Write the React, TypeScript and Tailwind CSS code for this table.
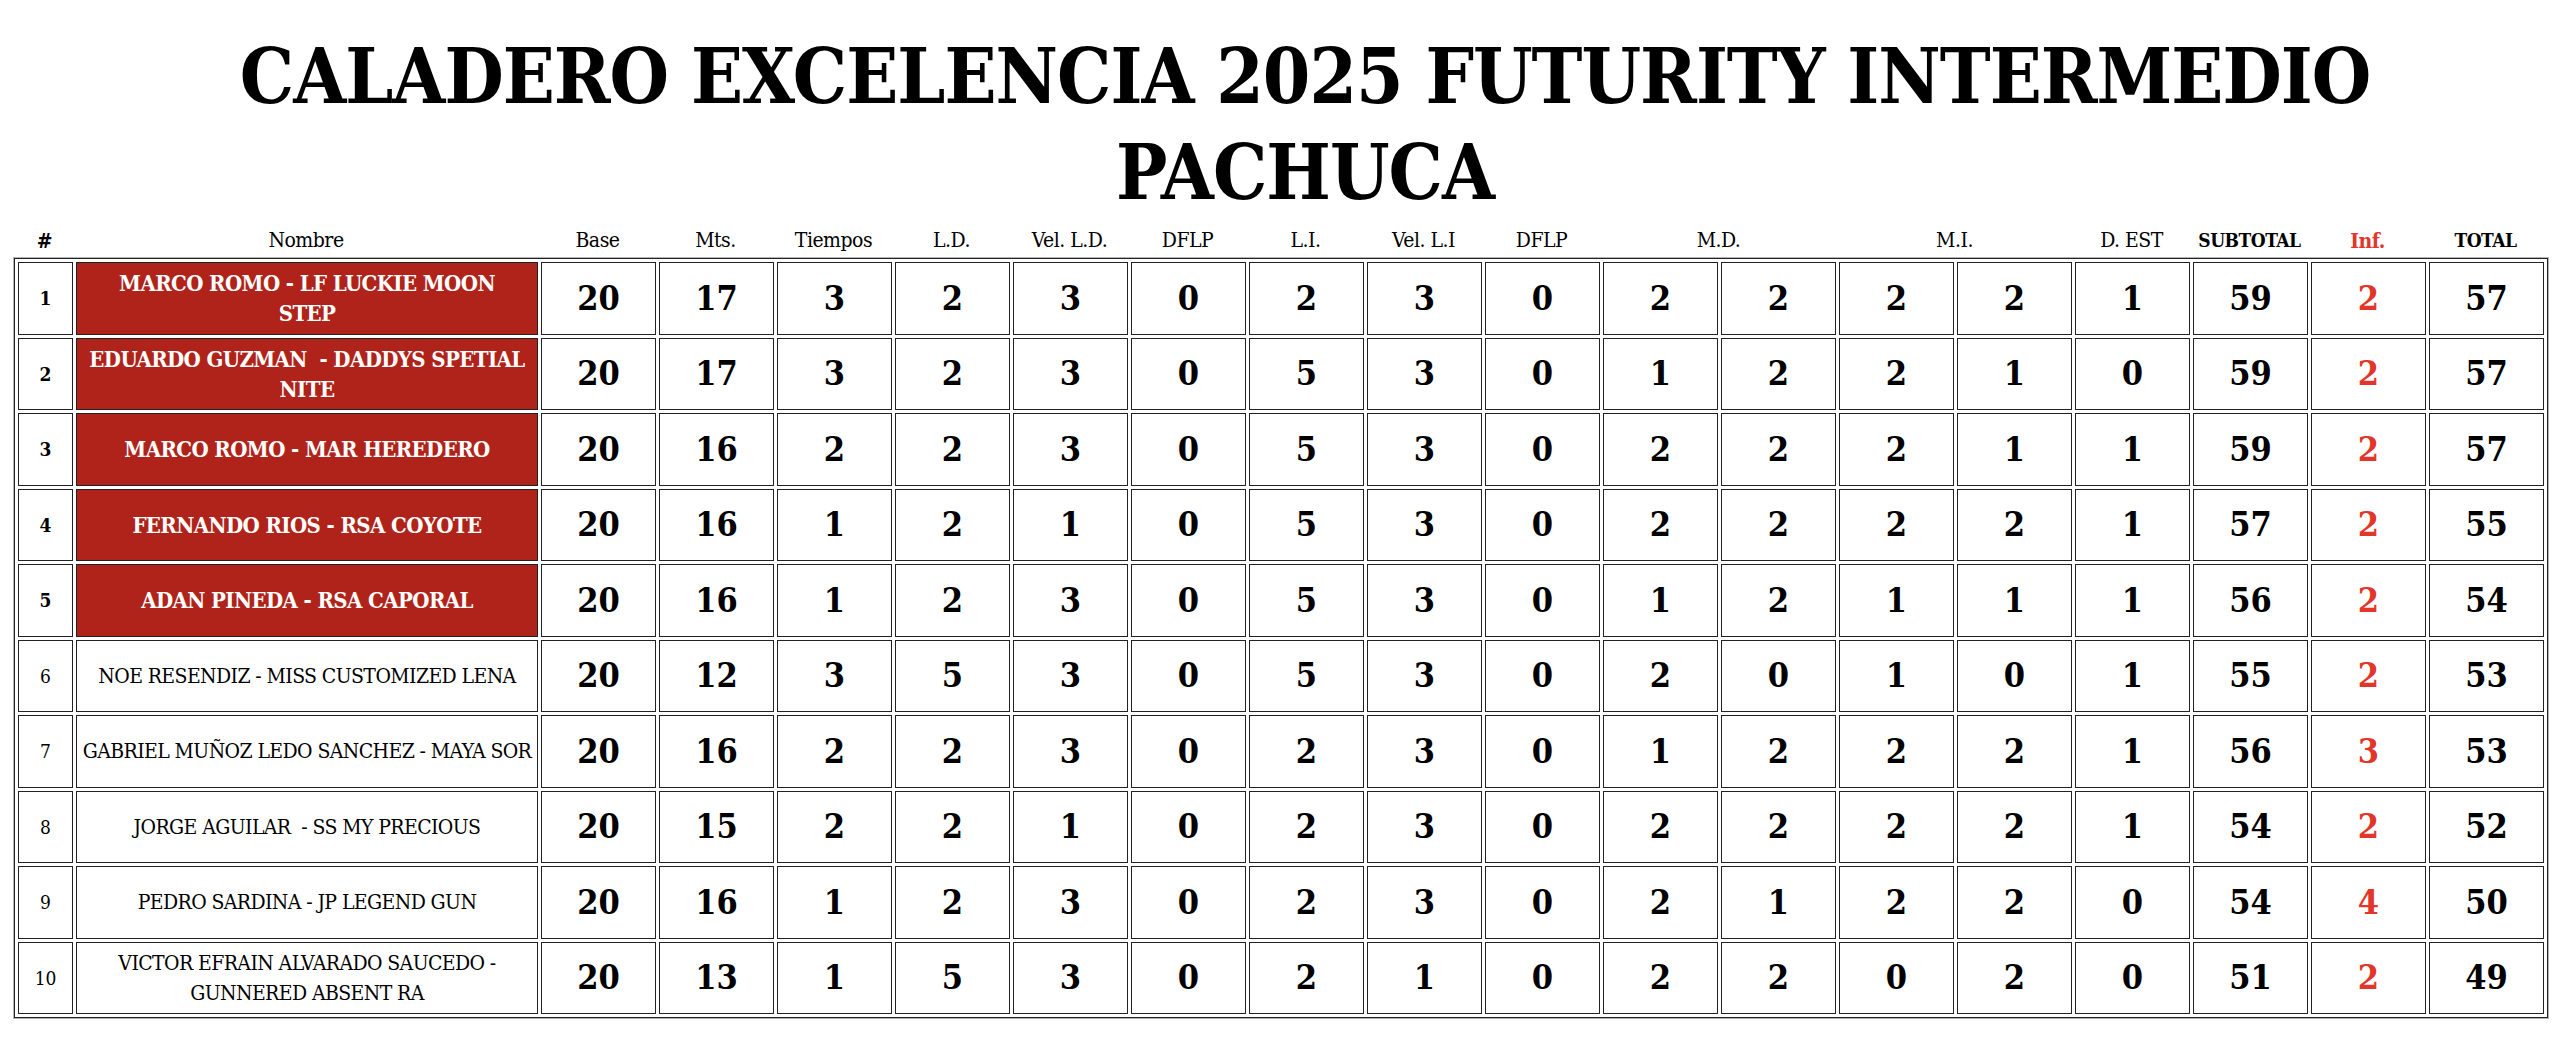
import React from 'react';

type Row = {
  n: number;
  name: string;
  vals: number[];
  top: boolean;
};

// line breaks follow the printed sheet
const rows: Row[] = [
  { n: 1, name: 'MARCO ROMO - LF LUCKIE MOON\nSTEP', vals: [20, 17, 3, 2, 3, 0, 2, 3, 0, 2, 2, 2, 2, 1, 59, 2, 57], top: true },
  { n: 2, name: 'EDUARDO GUZMAN  - DADDYS SPETIAL\nNITE', vals: [20, 17, 3, 2, 3, 0, 5, 3, 0, 1, 2, 2, 1, 0, 59, 2, 57], top: true },
  { n: 3, name: 'MARCO ROMO - MAR HEREDERO', vals: [20, 16, 2, 2, 3, 0, 5, 3, 0, 2, 2, 2, 1, 1, 59, 2, 57], top: true },
  { n: 4, name: 'FERNANDO RIOS - RSA COYOTE', vals: [20, 16, 1, 2, 1, 0, 5, 3, 0, 2, 2, 2, 2, 1, 57, 2, 55], top: true },
  { n: 5, name: 'ADAN PINEDA - RSA CAPORAL', vals: [20, 16, 1, 2, 3, 0, 5, 3, 0, 1, 2, 1, 1, 1, 56, 2, 54], top: true },
  { n: 6, name: 'NOE RESENDIZ - MISS CUSTOMIZED LENA', vals: [20, 12, 3, 5, 3, 0, 5, 3, 0, 2, 0, 1, 0, 1, 55, 2, 53], top: false },
  { n: 7, name: 'GABRIEL MUÑOZ LEDO SANCHEZ - MAYA SOR', vals: [20, 16, 2, 2, 3, 0, 2, 3, 0, 1, 2, 2, 2, 1, 56, 3, 53], top: false },
  { n: 8, name: 'JORGE AGUILAR  - SS MY PRECIOUS', vals: [20, 15, 2, 2, 1, 0, 2, 3, 0, 2, 2, 2, 2, 1, 54, 2, 52], top: false },
  { n: 9, name: 'PEDRO SARDINA - JP LEGEND GUN', vals: [20, 16, 1, 2, 3, 0, 2, 3, 0, 2, 1, 2, 2, 0, 54, 4, 50], top: false },
  { n: 10, name: 'VICTOR EFRAIN ALVARADO SAUCEDO -\nGUNNERED ABSENT RA', vals: [20, 13, 1, 5, 3, 0, 2, 1, 0, 2, 2, 0, 2, 0, 51, 2, 49], top: false },
];

const INF_COL = 15;

// fixed column widths, border-spacing of 3px comes on top
const Cols: React.FC = () => (
  <colgroup>
    <col className="w-[55px]" />
    <col className="w-[462px]" />
    {Array.from({ length: 17 }).map((_, i) => (
      <col key={i} className="w-[115px]" />
    ))}
  </colgroup>
);

const App: React.FC = () => {
  return (
    <div className="min-h-screen bg-white text-black font-['DejaVu_Serif_Condensed','DejaVu_Serif',serif]">
      <h1 className="pt-[29px] pl-[50px] text-center text-[76px] leading-[96px] font-black tracking-[-1px]">
        CALADERO EXCELENCIA 2025 FUTURITY INTERMEDIO
        <br />
        PACHUCA
      </h1>

      <div className="mt-[6px] ml-[14px] w-[2528px]">
        <table className="w-full table-fixed border-separate border-spacing-x-[3px] border-spacing-y-0">
          <Cols />
          <thead>
            <tr className="h-[26px] text-[21px] leading-none tracking-[-0.5px]">
              <th className="font-bold">#</th>
              <th className="font-normal">Nombre</th>
              <th className="font-normal">Base</th>
              <th className="font-normal">Mts.</th>
              <th className="font-normal">Tiempos</th>
              <th className="font-normal">L.D.</th>
              <th className="font-normal">Vel. L.D.</th>
              <th className="font-normal">DFLP</th>
              <th className="font-normal">L.I.</th>
              <th className="font-normal">Vel. L.I</th>
              <th className="font-normal">DFLP</th>
              <th className="font-normal" colSpan={2}>M.D.</th>
              <th className="font-normal" colSpan={2}>M.I.</th>
              <th className="font-normal">D. EST</th>
              <th className="font-bold text-[19px]">SUBTOTAL</th>
              <th className="font-bold text-[#e2362b]">Inf.</th>
              <th className="font-bold text-[19px]">TOTAL</th>
            </tr>
          </thead>
        </table>

        <table className="mt-[5px] w-full table-fixed border-separate border-spacing-[3px] border border-[#222] shadow-[0_0_0_1px_#b5b5b5] bg-white">
          <Cols />
          <tbody>
            {rows.map((r) => (
              <tr key={r.n}>
                <td
                  className={`h-[72.5px] border border-[#222] text-center text-[19px] ${
                    r.top ? 'font-bold' : 'font-normal'
                  }`}
                >
                  {r.n}
                </td>
                <td
                  className={`border border-[#222] px-0.5 text-center leading-[30px] whitespace-pre-wrap ${
                    r.top
                      ? 'bg-[#b0231a] text-white font-bold text-[22px] tracking-[-0.6px]'
                      : 'font-normal text-[21px] tracking-[-0.6px]'
                  }`}
                >
                  {r.name}
                </td>
                {r.vals.map((v, i) => (
                  <td
                    key={i}
                    className={`border border-[#222] text-center text-[34px] font-bold ${
                      i === INF_COL ? 'text-[#e2362b]' : ''
                    }`}
                  >
                    {v}
                  </td>
                ))}
              </tr>
            ))}
          </tbody>
        </table>
      </div>
    </div>
  );
};

export default App;
